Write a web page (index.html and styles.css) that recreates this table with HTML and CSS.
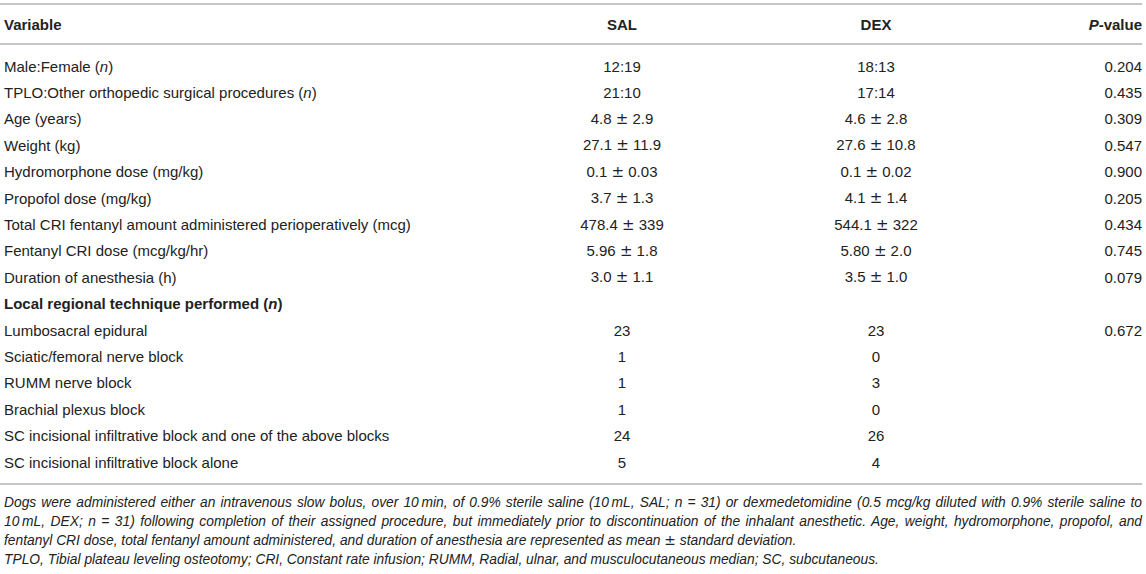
FILE: index.html
```html
<!DOCTYPE html>
<html>
<head>
<meta charset="utf-8">
<link rel="stylesheet" href="styles.css">
</head>
<body>
<div class="wrap">
  <div class="table">
    <div class="row head">
      <div class="c1">Variable</div>
      <div class="c2">SAL</div>
      <div class="c3">DEX</div>
      <div class="c4"><i>P</i>-value</div>
    </div>
    <div class="body">
      <div class="row"><div class="c1">Male:Female (<i>n</i>)</div><div class="c2">12:19</div><div class="c3">18:13</div><div class="c4">0.204</div></div>
      <div class="row"><div class="c1">TPLO:Other orthopedic surgical procedures (<i>n</i>)</div><div class="c2">21:10</div><div class="c3">17:14</div><div class="c4">0.435</div></div>
      <div class="row"><div class="c1">Age (years)</div><div class="c2">4.8 <span class="pm">±</span> 2.9</div><div class="c3">4.6 <span class="pm">±</span> 2.8</div><div class="c4">0.309</div></div>
      <div class="row"><div class="c1">Weight (kg)</div><div class="c2">27.1 <span class="pm">±</span> 11.9</div><div class="c3">27.6 <span class="pm">±</span> 10.8</div><div class="c4">0.547</div></div>
      <div class="row"><div class="c1">Hydromorphone dose (mg/kg)</div><div class="c2">0.1 <span class="pm">±</span> 0.03</div><div class="c3">0.1 <span class="pm">±</span> 0.02</div><div class="c4">0.900</div></div>
      <div class="row"><div class="c1">Propofol dose (mg/kg)</div><div class="c2">3.7 <span class="pm">±</span> 1.3</div><div class="c3">4.1 <span class="pm">±</span> 1.4</div><div class="c4">0.205</div></div>
      <div class="row"><div class="c1">Total CRI fentanyl amount administered perioperatively (mcg)</div><div class="c2">478.4 <span class="pm">±</span> 339</div><div class="c3">544.1 <span class="pm">±</span> 322</div><div class="c4">0.434</div></div>
      <div class="row"><div class="c1">Fentanyl CRI dose (mcg/kg/hr)</div><div class="c2">5.96 <span class="pm">±</span> 1.8</div><div class="c3">5.80 <span class="pm">±</span> 2.0</div><div class="c4">0.745</div></div>
      <div class="row"><div class="c1">Duration of anesthesia (h)</div><div class="c2">3.0 <span class="pm">±</span> 1.1</div><div class="c3">3.5 <span class="pm">±</span> 1.0</div><div class="c4">0.079</div></div>
      <div class="row"><div class="c1 bold">Local regional technique performed (<i>n</i>)</div><div class="c2"></div><div class="c3"></div><div class="c4"></div></div>
      <div class="row"><div class="c1">Lumbosacral epidural</div><div class="c2">23</div><div class="c3">23</div><div class="c4">0.672</div></div>
      <div class="row"><div class="c1">Sciatic/femoral nerve block</div><div class="c2">1</div><div class="c3">0</div><div class="c4"></div></div>
      <div class="row"><div class="c1">RUMM nerve block</div><div class="c2">1</div><div class="c3">3</div><div class="c4"></div></div>
      <div class="row"><div class="c1">Brachial plexus block</div><div class="c2">1</div><div class="c3">0</div><div class="c4"></div></div>
      <div class="row"><div class="c1">SC incisional infiltrative block and one of the above blocks</div><div class="c2">24</div><div class="c3">26</div><div class="c4"></div></div>
      <div class="row"><div class="c1">SC incisional infiltrative block alone</div><div class="c2">5</div><div class="c3">4</div><div class="c4"></div></div>
    </div>
  </div>
  <div class="foot">
    <p class="note"><span class="line full">Dogs were administered either an intravenous slow bolus, over 10&thinsp;min, of 0.9% sterile saline (10&thinsp;mL, SAL; n = 31) or dexmedetomidine (0.5 mcg/kg diluted with 0.9% sterile saline to</span><span class="line full">10&thinsp;mL, DEX; n = 31) following completion of their assigned procedure, but immediately prior to discontinuation of the inhalant anesthetic. Age, weight, hydromorphone, propofol, and</span><span class="line">fentanyl CRI dose, total fentanyl amount administered, and duration of anesthesia are represented as mean <span class="pm">±</span> standard deviation.</span></p>
    <p class="note">TPLO, Tibial plateau leveling osteotomy; CRI, Constant rate infusion; RUMM, Radial, ulnar, and musculocutaneous median; SC, subcutaneous.</p>
  </div>
</div>
</body>
</html>
```

FILE: styles.css
```css
html, body {
  margin: 0;
  padding: 0;
  background: #ffffff;
}
body {
  font-family: "Liberation Sans", Arial, Helvetica, sans-serif;
  font-size: 15px;
  color: #222222;
}
.wrap {
  width: 1142px;
  padding-top: 3px;
}
.table {
  border-top: 2px solid #c6c6c6;
  border-bottom: 2px solid #c6c6c6;
}
.row {
  display: grid;
  grid-template-columns: 495px 254px 254px 139px;
  height: 26.4px;
  align-items: center;
}
.row.head {
  height: 38px;
  font-weight: bold;
  border-bottom: 2px solid #c6c6c6;
}
.body {
  padding: 8px 0;
}
.c1 {
  padding-left: 4px;
  white-space: nowrap;
}
.c2, .c3 {
  text-align: center;
}
.c4 {
  text-align: right;
}
.bold {
  font-weight: bold;
}
.pm {
  font-family: "DejaVu Sans", sans-serif;
  font-style: normal;
}
.foot {
  padding: 8px 0 0 4px;
}
.note {
  margin: 0;
  font-size: 13.8px;
  font-style: italic;
  line-height: 19px;
}
.line {
  display: block;
  white-space: nowrap;
}
.line.full {
  text-align: justify;
  text-align-last: justify;
}
```
